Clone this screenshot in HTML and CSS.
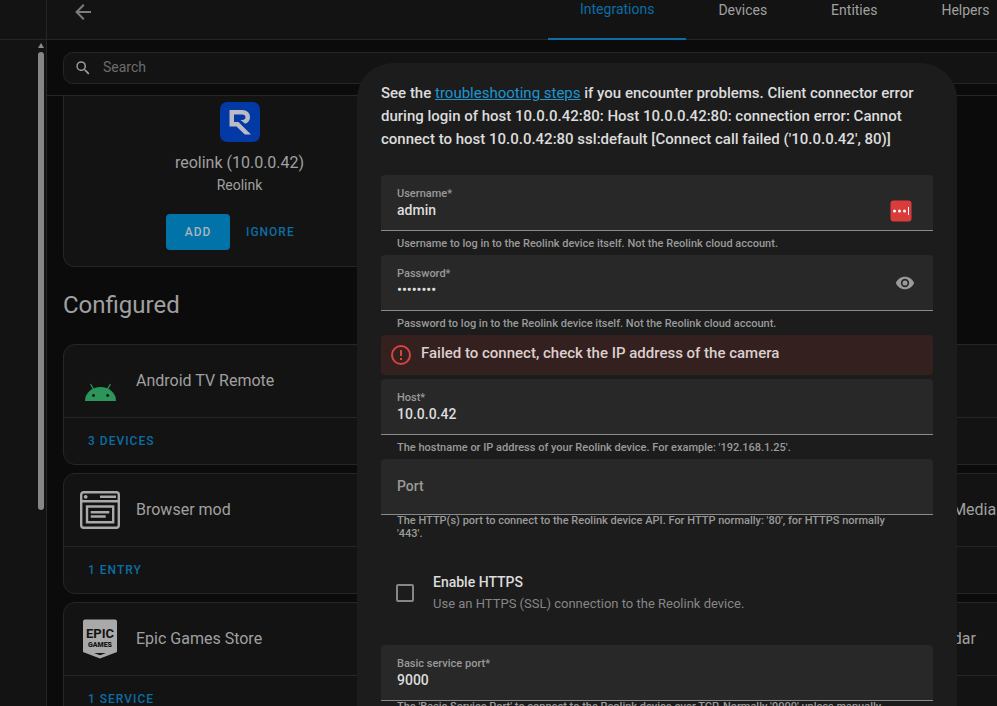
FILE: index.html
```
<!DOCTYPE html>
<html lang="en">
<head>
    <meta charset="UTF-8" />
    <meta name="viewport" content="width=device-width, initial-scale=1" />
    <title>Integrations</title>
    <link rel="stylesheet" href="styles.css">
</head>
<body>
<div class="app">
    <aside class="sidebar">
        <div class="sidebar-head"></div>
        <div class="scrollbar">
            <div class="scroll-arrow"></div>
            <div class="scroll-thumb"></div>
        </div>
    </aside>

    <main class="main">
        <header class="header">
            <button class="icon-btn" aria-label="Back">
                <svg width="24" height="24" viewBox="0 0 24 24"><path d="M20 11v2H8l5.500 5.500-1.420 1.420L4.160 12l7.920-7.920L13.500 5.500 8 11h12z"/></svg>
            </button>
            <nav class="tabs">
                <a href="#" class="tab active">Integrations</a>
                <a href="#" class="tab">Devices</a>
                <a href="#" class="tab">Entities</a>
                <a href="#" class="tab">Helpers</a>
            </nav>
        </header>

        <div class="toolbar">
            <label class="search">
                <svg width="18" height="18" viewBox="0 0 24 24"><path d="M9.500 3a6.500 6.500 0 0 1 4.940 10.730l.27.27h.79l5 5-1.500 1.500-5-5v-.79l-.27-.27A6.500 6.500 0 1 1 9.500 3m0 2a4.500 4.500 0 1 0 0 9 4.500 4.500 0 0 0 0-9z"/></svg>
                <input type="text" placeholder="Search" />
            </label>
        </div>

        <div class="content">
            <section class="grid">
                <article class="card discovered">
                    <svg width="40" height="40" viewBox="0 0 40 40">
                        <rect width="40" height="40" rx="7" fill="#0239a4"/>
                        <path fill="#b9bcc4" d="M9.500 8H22c5 0 8 3 8 7.200 0 3.200-1.800 5.600-4.800 6.600L20.500 18h1.700c2 0 3.300-1 3.300-2.800S24.200 12.500 22 12.500h-8V20h4.500L31 32.500h-6.200L16.500 24.500h-7z"/>
                    </svg>
                    <h3>reolink (10.0.0.42)</h3>
                    <p>Reolink</p>
                    <div class="actions">
                        <button class="btn filled">ADD</button>
                        <button class="btn">IGNORE</button>
                    </div>
                </article>
            </section>

            <h1>Configured</h1>

            <section class="grid">
                <article class="card">
                    <div class="card-head">
                        <svg width="40" height="40" viewBox="0 0 40 40">
                            <path fill="#2b955a" d="M5 40a15.500 14 0 0 1 31 0z"/>
                            <path stroke="#2b955a" stroke-width="1.300" stroke-linecap="round" d="M10.800 23.500l3 5M30.200 23.500l-3 5"/>
                            <circle cx="13.500" cy="34.500" r="1.400" fill="#131313"/>
                            <circle cx="27.700" cy="34.500" r="1.400" fill="#131313"/>
                        </svg>
                        <h3>Android TV Remote</h3>
                    </div>
                    <div class="card-foot"><button class="btn">3 DEVICES</button></div>
                </article>
                <article class="card last">
                    <div class="card-head"></div>
                    <div class="card-foot"></div>
                </article>

                <article class="card">
                    <div class="card-head">
                        <svg width="40" height="40" viewBox="0 0 40 40" fill="none" stroke="#a9a9a9" stroke-width="2.400">
                            <rect x="1.200" y="2.200" width="37.600" height="35.600" rx="2.500"/>
                            <path d="M1 11.300h38M7 16.500h26.200v15.700H7z"/>
                            <circle cx="5.700" cy="6.800" r="1.900" fill="#a9a9a9" stroke="none"/>
                            <path d="M20 6.800h16M10.700 22.200h18.600M10.700 26.500h15"/>
                        </svg>
                        <h3>Browser mod</h3>
                    </div>
                    <div class="card-foot"><button class="btn">1 ENTRY</button></div>
                </article>
                <article class="card last">
                    <div class="card-head indent"><h3>DLNA Digital Media</h3></div>
                    <div class="card-foot"></div>
                </article>

                <article class="card">
                    <div class="card-head">
                        <svg class="epic" width="40" height="40" viewBox="0 0 40 40">
                            <path fill="#a9a9a9" d="M5 .5h30q2 0 2 2V33L20 39.500 3 33V2.500q0-2 2-2z"/>
                            <path fill="#131313" d="M14 34h12l-6 2.300z"/>
                            <text x="20" y="19" class="epic-name">EPIC</text>
                            <text x="20" y="28" class="epic-games">GAMES</text>
                        </svg>
                        <h3>Epic Games Store</h3>
                    </div>
                    <div class="card-foot"><button class="btn">1 SERVICE</button></div>
                </article>
                <article class="card last">
                    <div class="card-head indent"><h3>Google Calendar</h3></div>
                    <div class="card-foot"></div>
                </article>
            </section>
        </div>
    </main>
</div>

<div class="dialog" role="dialog" aria-label="Reolink">
    <p class="intro">See the <a href="#">troubleshooting steps</a> if you encounter problems. Client connector error during login of host 10.0.0.42:80: Host 10.0.0.42:80: connection error: Cannot connect to host 10.0.0.42:80 ssl:default [Connect call failed ('10.0.0.42', 80)]</p>

    <form>
        <div class="field">
            <div class="field-text">
                <label for="username">Username*</label>
                <input type="text" id="username" value="admin" />
            </div>
            <svg class="autofill" width="22" height="22" viewBox="0 0 22 22">
                <rect x=".5" y=".5" width="21" height="21" rx="3" fill="#d93c3a"/>
                <g fill="#fff"><circle cx="4.500" cy="11" r="1.500"/><circle cx="9.500" cy="11" r="1.500"/><circle cx="14.500" cy="11" r="1.500"/><rect x="18" y="7" width="1" height="8"/></g>
            </svg>
        </div>
        <div class="helper">Username to log in to the Reolink device itself. Not the Reolink cloud account.</div>

        <div class="field">
            <div class="field-text">
                <label for="password">Password*</label>
                <input type="password" id="password" value="password" />
            </div>
            <button type="button" class="icon-btn" aria-label="Show password">
                <svg width="20" height="20" viewBox="0 0 24 24"><path d="M12 9a3 3 0 1 1 0 6 3 3 0 0 1 0-6m0-4.500c5 0 9.270 3.110 11 7.500-1.730 4.390-6 7.500-11 7.500S2.730 16.390 1 12c1.730-4.390 6-7.500 11-7.500M12 7a5 5 0 1 0 0 10 5 5 0 0 0 0-10z"/></svg>
            </button>
        </div>
        <div class="helper">Password to log in to the Reolink device itself. Not the Reolink cloud account.</div>

        <div class="alert" role="alert">
            <svg width="24" height="24" viewBox="0 0 24 24"><path d="M11 15h2v2h-2zm0-8h2v6h-2zm1-5a10 10 0 1 1 0 20 10 10 0 0 1 0-20m0 2a8 8 0 1 0 0 16 8 8 0 0 0 0-16z"/></svg>
            <span>Failed to connect, check the IP address of the camera</span>
        </div>

        <div class="field">
            <div class="field-text">
                <label for="host">Host*</label>
                <input type="text" id="host" value="10.0.0.42" />
            </div>
        </div>
        <div class="helper">The hostname or IP address of your Reolink device. For example: '192.168.1.25'.</div>

        <div class="field">
            <input type="text" id="port" placeholder="Port" aria-label="Port" />
        </div>
        <div class="helper">The HTTP(s) port to connect to the Reolink device API. For HTTP normally: '80', for HTTPS normally '443'.</div>

        <div class="check-row">
            <input type="checkbox" id="https" />
            <label for="https">
                <span>Enable HTTPS</span>
                <small>Use an HTTPS (SSL) connection to the Reolink device.</small>
            </label>
        </div>

        <div class="field">
            <div class="field-text">
                <label for="service-port">Basic service port*</label>
                <input type="text" id="service-port" value="9000" />
            </div>
        </div>
        <div class="helper">The 'Basic Service Port' to connect to the Reolink device over TCP. Normally '9000' unless manually changed.</div>
    </form>
</div>
</body>
</html>
```
FILE: styles.css
```
* {
    box-sizing: border-box;
}
body {
    margin: 0;
    height: 100vh;
    overflow: hidden;
    font-family: Roboto, sans-serif;
    font-size: 14px;
    background: #0b0b0b;
    color: #a0a0a0;
}
h1, h3, p {
    margin: 0;
    font-weight: 400;
}
input, button {
    font-family: inherit;
    border: none;
    background: none;
    padding: 0;
    outline: none;
}
svg {
    display: block;
    flex-shrink: 0;
}
.app {
    display: flex;
    height: 100%;
}

/* sidebar */
.sidebar {
    width: 47px;
    flex-shrink: 0;
    background: #131313;
    border-right: 1px solid #262626;
}
.sidebar-head {
    height: 40px;
    border-bottom: 1px solid #262626;
}
.scrollbar {
    display: flex;
    flex-direction: column;
    align-items: center;
    gap: 4px;
    width: 6px;
    margin: 3px 2px 0 auto;
}
.scroll-arrow {
    border: 3px solid transparent;
    border-top: none;
    border-bottom: 5px solid #8c8c8c;
}
.scroll-thumb {
    width: 6px;
    height: 458px;
    border-radius: 3px;
    background: #868686;
}

/* header */
.main {
    flex: 1;
    min-width: 0;
    overflow: hidden;
}
.header {
    display: flex;
    align-items: center;
    height: 56px;
    margin-top: -16px;
    padding-left: 24px;
    background: #131313;
    border-bottom: 1px solid #262626;
}
.icon-btn {
    color: #7c7c7c;
    cursor: pointer;
}
.icon-btn svg, .search svg, .alert svg {
    fill: currentColor;
}
.tabs {
    display: flex;
    align-self: stretch;
    flex-shrink: 0;
    margin: 0 0 -1px 453px;
}
.tab {
    display: flex;
    align-items: center;
    padding: 0 32px 4px;
    color: #a0a0a0;
    text-decoration: none;
}
.tab.active {
    color: #0a6ea5;
    border-bottom: 2px solid #0a6ea5;
}
.toolbar {
    padding: 12px 0 11px 16px;
    border-bottom: 1px solid #262626;
}
.search {
    display: flex;
    align-items: center;
    gap: 11px;
    height: 32px;
    margin-right: -16px;
    padding-left: 10px;
    border: 1px solid #262626;
    border-radius: 10px;
    background: #131313;
}
.search input {
    flex: 1;
    padding-bottom: 2px;
    font-size: 14px;
    color: #a0a0a0;
}
.search input::placeholder {
    color: #6c6c6c;
}

/* integration cards */
.content {
    padding-left: 16px;
}
.content h1 {
    font-size: 24px;
    line-height: 77px;
}
.grid {
    display: grid;
    grid-template-columns: repeat(3, 353px);
    gap: 8px;
}
.card {
    grid-column: 1;
    border: 1px solid #262626;
    border-radius: 12px;
    background: #131313;
}
.card.last {
    grid-column: 3;
}
.card h3 {
    font-size: 16px;
    line-height: 24px;
}
.card-head {
    display: flex;
    align-items: center;
    gap: 16px;
    height: 73px;
    padding: 0 16px;
    border-bottom: 1px solid #262626;
}
.card-head.indent {
    padding-left: 72px;
}
.card-foot {
    display: flex;
    align-items: center;
    height: 46px;
    padding-left: 24px;
}
.discovered {
    display: flex;
    flex-direction: column;
    align-items: center;
    padding: 6px 16px 16px;
    border-top: none;
    border-radius: 0 0 12px 12px;
}
.discovered h3 {
    margin-top: 9px;
}
.discovered p {
    line-height: 20px;
}
.actions {
    display: flex;
    width: 100%;
    margin-top: 19px;
    padding-left: 86px;
    gap: 16px;
}
.btn {
    font-size: 12px;
    font-weight: 500;
    letter-spacing: 1px;
    color: #0a6ea5;
    cursor: pointer;
}
.btn.filled {
    width: 64px;
    height: 36px;
    border-radius: 4px;
    background: #0273a8;
    color: #a8b6bd;
}
.epic text {
    font-family: Roboto, sans-serif;
    font-weight: 900;
    fill: #131313;
    text-anchor: middle;
}
.epic .epic-name {
    font-size: 13px;
    font-weight: 700;
}
.epic .epic-games {
    font-size: 7px;
}

/* config flow dialog */
.dialog {
    position: fixed;
    top: 63px;
    bottom: 0;
    left: 357px;
    width: 600px;
    max-width: 100%;
    padding: 19px 24px 0;
    overflow: hidden;
    border-radius: 36px 36px 0 0;
    background: #1c1c1c;
    color: #dcdcdc;
    font-weight: 500;
}
.intro {
    margin-bottom: 24px;
    font-size: 15px;
    font-weight: 500;
    line-height: 23px;
}
.intro a {
    color: #1c96d0;
    font-weight: 400;
}
.field {
    display: flex;
    align-items: center;
    height: 56px;
    padding: 0 16px 2px;
    border-bottom: 1px solid #8a8a8a;
    border-radius: 4px 4px 0 0;
    background: #282828;
}
.field-text {
    flex: 1;
    display: flex;
    flex-direction: column;
}
.field label {
    font-size: 11px;
    line-height: 16px;
    color: #9a9a9a;
}
.field input {
    width: 100%;
    height: 16px;
    font-size: 14px;
    font-weight: 500;
    color: #dcdcdc;
}
.field input::placeholder {
    color: #9a9a9a;
}
.field .icon-btn {
    color: #9a9a9a;
    padding: 2px 2px 0;
}
.autofill {
    margin: 18px 5px 0 0;
}
.helper {
    display: flex;
    align-items: center;
    height: 24px;
    padding: 0 24px 0 16px;
    font-size: 11px;
    line-height: 13px;
    color: #9a9a9a;
}
.alert {
    display: flex;
    align-items: center;
    gap: 8px;
    height: 40px;
    margin-bottom: 4px;
    padding: 0 8px;
    border-radius: 4px;
    background: #33201f;
    color: #dccfce;
    font-size: 15px;
}
.alert span {
    padding-bottom: 4px;
}
.alert svg {
    color: #d5443d;
}
.check-row {
    display: flex;
    align-items: center;
    gap: 19px;
    height: 106px;
    padding: 1px 0 0 15px;
}
.check-row input {
    appearance: none;
    width: 18px;
    height: 18px;
    margin: 0;
    border: 2px solid #868686;
    border-radius: 2px;
}
.check-row span, .check-row small {
    display: block;
    line-height: 22px;
}
.check-row small {
    font-size: 13px;
    font-weight: 400;
    color: #868686;
}
```
